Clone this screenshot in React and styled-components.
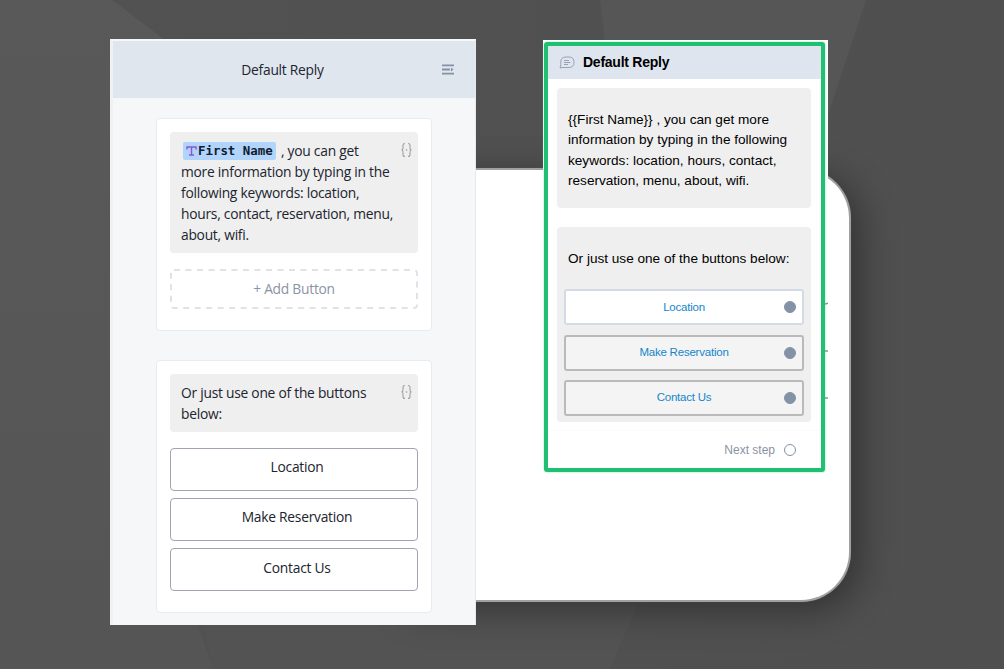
import React from "react";
import styled, { createGlobalStyle } from "styled-components";

const GlobalStyle = createGlobalStyle`
  * { box-sizing: border-box; }
  body { margin: 0; background: #515151; }
`;

const Page = styled.main`
  position: relative;
  width: 1004px;
  height: 669px;
  overflow: hidden;
  display: flex;
  align-items: flex-start;
  gap: 67px;
  padding: 39px 0 0 110px;
  isolation: isolate;
`;

const Facets = styled.svg`
  position: absolute;
  inset: 0;
  z-index: -2;
`;

const BackCard = styled.div`
  position: absolute;
  z-index: -1;
  left: 400px;
  top: 168px;
  width: 451px;
  height: 434px;
  background: #fff;
  border: 2px solid #a0a0a0;
  border-left: 0;
  border-radius: 0 50px 50px 0;
  box-shadow: 8px 8px 36px 0 rgba(0, 0, 0, 0.38), 0 0 1px #777;
`;

const Editor = styled.section`
  width: 366px;
  height: 586px;
  background: #f5f7f9;
  border-top: 2px solid #f6f7f9;
  border-left: 3px solid #eff1f4;
  border-right: 1px solid #e6e9ee;
  font-family: "Open Sans", "Noto Sans", sans-serif;
  font-size: 13.8px;
  letter-spacing: -0.25px;
  color: #20242e;
`;

const EditorHeader = styled.header`
  display: grid;
  grid-template-columns: 1fr auto 1fr;
  align-items: center;
  height: 57px;
  padding: 0 21px 0 0;
  background: #dfe6ee;
  margin-bottom: 20px;
  svg { justify-self: end; }
`;

const EditorTitle = styled.h1`
  grid-column: 2;
  margin: 0 2px 0 0;
  font-size: inherit;
  font-weight: 400;
`;

const Block = styled.article`
  width: 276px;
  height: ${(p) => p.$height}px;
  margin: 0 0 29px 43px;
  padding: 13px;
  background: #fff;
  border: 1px solid #e8ebf1;
  border-radius: 4px;
`;

const Message = styled.div`
  display: flex;
  justify-content: space-between;
  width: 248px;
  padding: 8px 5px 8px 11px;
  margin-bottom: 16px;
  border-radius: 4px;
  background: #efefef;
  line-height: 21px;
  svg { flex: none; }
  > svg { margin-top: 2px; }
`;

const MessageText = styled.p`
  margin: 0;
  white-space: nowrap;
`;

const Variable = styled.span`
  display: inline-flex;
  align-items: center;
  height: 18px;
  padding: 1px 3px 0 3px;
  margin: 0 2px 0 2px;
  border-radius: 2px;
  background: #b0d4fa;
  color: #101b30;
  font: bold 12.4px/18px "DejaVu Sans Mono", monospace;
  letter-spacing: 0;
`;

const AddButton = styled.div`
  display: flex;
  width: 248px;
  height: 40px;
  color: #8a93a3;
  svg { position: absolute; }
`;

const AddLabel = styled.span`
  flex: 1;
  text-align: center;
  line-height: 39px;
`;

const Choice = styled.button`
  display: block;
  width: 248px;
  height: 43px;
  margin: 0 0 7.4px;
  padding: 0 0 5px 6px;
  border: 1px solid #a2a5b0;
  border-radius: 4px;
  background: #fff;
  font: inherit;
  letter-spacing: inherit;
  color: inherit;
`;

const Preview = styled.section`
  width: 285px;
  height: 436px;
  margin-top: 1px;
  padding: 2px 3px 4px 1px;
  background: #fff;
  display: flex;
  position: relative;
  font-family: "Liberation Sans", Arial, sans-serif;
  color: #000;
`;

const Frame = styled.div`
  flex: none;
  width: 281px;
  height: 430px;
  border: 4px solid #20c073;
  border-radius: 3px;
  box-shadow: 0 0 2px #7fe0b0;
`;

const PreviewHeader = styled.header`
  display: flex;
  align-items: center;
  height: 33px;
  padding: 0 0 1px 11px;
  gap: 8px;
  background: #dfe5ee;
`;

const PreviewTitle = styled.h2`
  margin: 0;
  font-size: 14px;
  letter-spacing: -0.25px;
  line-height: 20px;
`;

const Bubble = styled.div`
  width: 254px;
  height: ${(p) => p.$height}px;
  margin: ${(p) => p.$top}px 0 0 9px;
  padding: 22px 7px 0;
  border-radius: 4px;
  background: #efefef;
`;

const BubbleText = styled.p`
  margin: 0 0 20.4px;
  padding-left: 4px;
  font-size: 13.6px;
  line-height: 20.3px;
  white-space: nowrap;
`;

const Reply = styled.button`
  display: grid;
  grid-template-columns: 1fr auto 1fr;
  align-items: center;
  width: 240px;
  height: 36px;
  margin: 0 0 9.3px;
  padding: 0 6px 0 6px;
  border: 2px solid ${(p) => (p.$active ? "#d5dbe6" : "#bababb")};
  border-radius: 3px;
  background: ${(p) => (p.$active ? "#fff" : "#f4f4f4")};
  font: 11.5px "Liberation Sans", Arial, sans-serif;
  letter-spacing: -0.22px;
  color: #1586cb;
`;

const ReplyLabel = styled.span`
  grid-column: 2;
  padding-bottom: 1px;
`;

const Port = styled.i`
  justify-self: end;
  width: 12px;
  height: 12px;
  border-radius: 50%;
  background: ${(p) => (p.$open ? "#fff" : "#8492a6")};
  border: 1px solid #8492a6;
`;

const NextStep = styled.footer`
  display: flex;
  justify-content: flex-end;
  align-items: center;
  gap: 9px;
  height: 35px;
  margin-top: 8.4px;
  padding: 2.5px 25px 0 0;
  border-top: 1px solid #fafafb;
  font-size: 12px;
  color: #8b93a3;
`;

const Links = styled.svg`
  position: absolute;
  left: 282px;
  top: 258px;
`;

const Braces = () => (
  <svg width="13" height="16" viewBox="0 0 13 16" fill="none" stroke="#a0a0a0" strokeWidth="1.1">
    <path d="M5 1.5Q3 1.5 3 3.5V6Q3 8 1.5 8Q3 8 3 10V12.5Q3 14.5 5 14.5" />
    <path d="M8 1.5Q10 1.5 10 3.5V6Q10 8 11.5 8Q10 8 10 10V12.5Q10 14.5 8 14.5" />
    <circle cx="6.5" cy="8" r=".8" fill="#999" stroke="none" />
  </svg>
);

export default function App() {
  return (
    <Page>
      <GlobalStyle />
      <Facets width="1004" height="669">
        <defs>
          <linearGradient id="base" x1="0" x2="1" y1="0" y2="0">
            <stop offset="0" stopColor="#525252" />
            <stop offset="1" stopColor="#4f4f4f" />
          </linearGradient>
          <linearGradient id="side" x1="0" x2="0" y1="0" y2="1">
            <stop offset="0" stopColor="#595959" />
            <stop offset="1" stopColor="#555" />
          </linearGradient>
        </defs>
        <rect width="1004" height="669" fill="url(#base)" />
        <path d="M0 0H112L165 40L196 620L213 669H0Z" fill="url(#side)" />
        <path d="M600 0H866L828 115V180H620Z" fill="#565656" />
        <path d="M213 669L196 600H640L610 669Z" fill="#535353" />
      </Facets>
      <BackCard />

      <Editor>
        <EditorHeader>
          <EditorTitle>Default Reply</EditorTitle>
          <svg width="12" height="11" viewBox="0 0 12 11" fill="#8492a6">
            <path d="M0 .5H12V2.3H0ZM0 4.6H8V6.4H0ZM0 8.7H12V10.5H0ZM9 3.4L11.6 5.5L9 7.6Z" />
          </svg>
        </EditorHeader>

        <Block $height={212.5}>
          <Message>
            <MessageText>
              <Variable>
                <svg width="12" height="10" viewBox="0 0 12 10" fill="none" stroke="#8a55dc" strokeWidth="1.4">
                  <path d="M1 3.5V1H10V3.5M5.500 1V9M3 9H8" />
                </svg>
                First Name
              </Variable>{" "}
              , you can get
              <br />
              more information by typing in the
              <br />
              following keywords: location,
              <br />
              hours, contact, reservation, menu,
              <br />
              about, wifi.
            </MessageText>
            <Braces />
          </Message>
          <AddButton>
            <svg width="248" height="40" fill="none" stroke="#e0e2e6" strokeWidth="2">
              <rect x="1" y="1" width="246" height="38" rx="3" strokeDasharray="6 5.5" />
            </svg>
            <AddLabel>+ Add Button</AddLabel>
          </AddButton>
        </Block>

        <Block $height={253}>
          <Message>
            <MessageText>
              Or just use one of the buttons
              <br />
              below:
            </MessageText>
            <Braces />
          </Message>
          <Choice>Location</Choice>
          <Choice>Make Reservation</Choice>
          <Choice>Contact Us</Choice>
        </Block>
      </Editor>

      <Preview>
        <Frame>
          <PreviewHeader>
            <svg width="16" height="13" viewBox="0 0 16 13" fill="none" stroke="#98a3b5" strokeWidth="1">
              <path d="M1 12L1.8 9V6Q1.8 1 7 1H10Q15 1 15 6.3Q15 11.5 10 11.5H3ZM5 4.5H10M5 6.5H11.5M5 8.5H9" />
            </svg>
            <PreviewTitle>Default Reply</PreviewTitle>
          </PreviewHeader>
          <Bubble $height={120} $top={9}>
            <BubbleText>
              {"{{First Name}} , you can get more"}
              <br />
              information by typing in the following
              <br />
              keywords: location, hours, contact,
              <br />
              reservation, menu, about, wifi.
            </BubbleText>
          </Bubble>
          <Bubble $height={195.5} $top={18.6}>
            <BubbleText>Or just use one of the buttons below:</BubbleText>
            <Reply $active>
              <ReplyLabel>Location</ReplyLabel>
              <Port />
            </Reply>
            <Reply>
              <ReplyLabel>Make Reservation</ReplyLabel>
              <Port />
            </Reply>
            <Reply>
              <ReplyLabel>Contact Us</ReplyLabel>
              <Port />
            </Reply>
          </Bubble>
          <NextStep>
            Next step <Port $open />
          </NextStep>
        </Frame>
        <Links width="3" height="104" fill="none" stroke="#8b929c" strokeWidth="1.5">
          <path d="M0 6L4 5M0 53H4M0 100H4" />
        </Links>
      </Preview>
    </Page>
  );
}
